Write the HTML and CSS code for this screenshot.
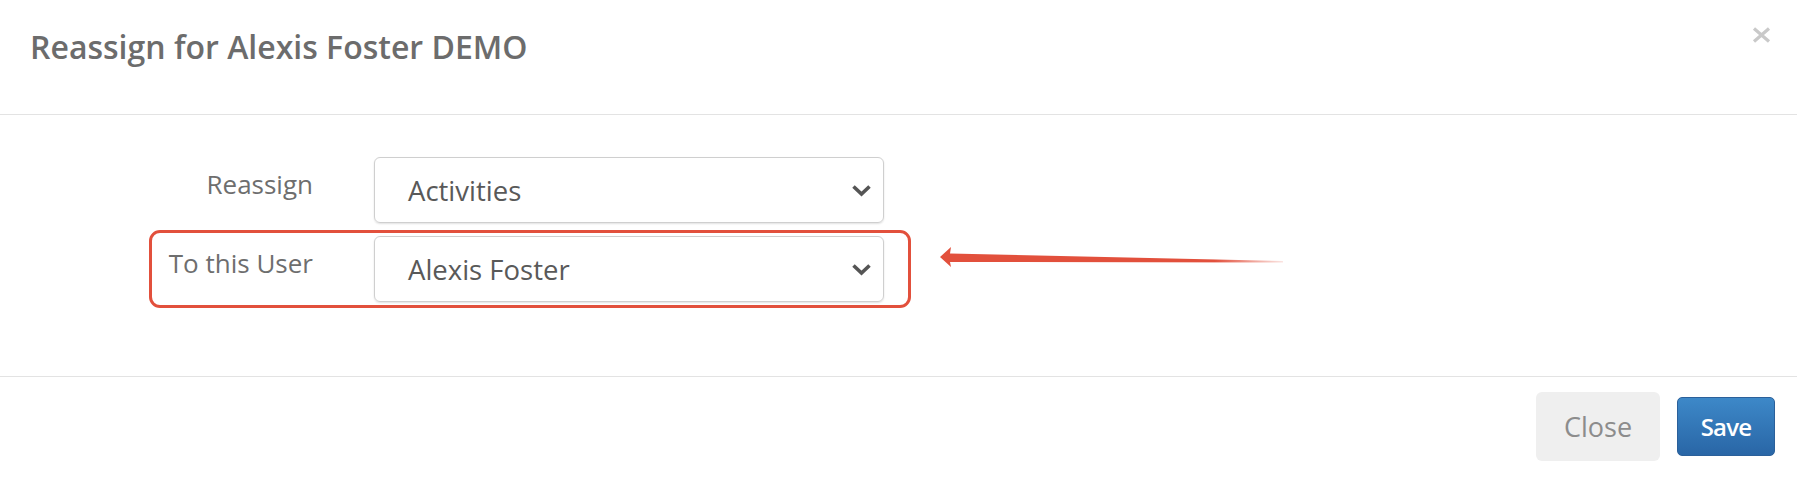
FILE: index.html
```html
<!DOCTYPE html>
<html>
<head>
<meta charset="utf-8">
<link rel="stylesheet" href="styles.css">
</head>
<body>
<div class="modal">
  <div class="modal-header">
    <h4 class="modal-title">Reassign for Alexis Foster DEMO</h4>
    <button class="close" aria-label="Close">
      <svg width="19" height="16" viewBox="0 0 19 16"><path d="M2 1.5 L17 14.5 M17 1.5 L2 14.5" stroke="#c9c9c9" stroke-width="3.2" stroke-linecap="butt"/></svg>
    </button>
  </div>
  <div class="modal-body">
    <div class="form-row">
      <label class="control-label">Reassign</label>
      <div class="select">
        <span class="select-value">Activities</span>
        <svg class="chevron" width="21" height="13" viewBox="0 0 21 13"><path d="M2.5 2.5 L10.5 10 L18.5 2.5" fill="none" stroke="#555" stroke-width="3.6"/></svg>
      </div>
    </div>
    <div class="form-row highlight">
      <label class="control-label">To this User</label>
      <div class="select">
        <span class="select-value">Alexis Foster</span>
        <svg class="chevron" width="21" height="13" viewBox="0 0 21 13"><path d="M2.5 2.5 L10.5 10 L18.5 2.5" fill="none" stroke="#555" stroke-width="3.6"/></svg>
      </div>
    </div>
    <svg class="arrow" width="350" height="26" viewBox="0 0 350 26">
      <defs>
        <linearGradient id="fade" x1="0" y1="0" x2="1" y2="0">
          <stop offset="0" stop-color="#e2503c"/>
          <stop offset="0.8" stop-color="#e2503c"/>
          <stop offset="1" stop-color="#e2503c" stop-opacity="0.15"/>
        </linearGradient>
      </defs>
      <polygon points="2,12 13,2 12,8.5 345,16 345,17.5 12,17 13,22" fill="url(#fade)"/>
    </svg>
  </div>
  <div class="modal-footer">
    <button class="btn btn-default">Close</button>
    <button class="btn btn-primary">Save</button>
  </div>
</div>
</body>
</html>
```
FILE: styles.css
```css
* { box-sizing: border-box; }
html, body {
  margin: 0;
  padding: 0;
  background: #fff;
}
body {
  font-family: "Open Sans", "Liberation Sans", sans-serif;
  width: 1797px;
  height: 487px;
  overflow: hidden;
}
.modal {
  width: 100%;
}
.modal-header {
  height: 115px;
  border-bottom: 1px solid #e3e3e3;
  display: flex;
  justify-content: space-between;
  align-items: flex-start;
  padding: 0 26px 0 30px;
}
.modal-title {
  margin: 0;
  padding-top: 29px;
  font-size: 32px;
  line-height: 36px;
  font-weight: 600;
  color: #6c6c6c;
}
.close {
  margin-top: 27px;
  padding: 0;
  border: 0;
  background: none;
  width: 19px;
  height: 16px;
  display: block;
}
.close svg { display: block; }
.modal-body {
  position: relative;
  height: 261px;
  padding: 36px 0 0 149px;
  display: flex;
  flex-direction: column;
  gap: 1px;
}
.form-row {
  width: 762px;
  height: 78px;
  display: flex;
  align-items: flex-start;
  border: 3px solid transparent;
  border-radius: 11px;
  padding: 3px 24px 3px 0;
}
.form-row.highlight {
  border-color: #e2503c;
}
.control-label {
  width: 161px;
  margin-right: 61px;
  text-align: right;
  font-size: 26px;
  line-height: 36px;
  padding-top: 9px;
  color: #6e6e6e;
  white-space: nowrap;
}
.select {
  width: 510px;
  height: 66px;
  border: 1px solid #cfcfcf;
  border-radius: 6px;
  box-shadow: 0 1px 2px rgba(0,0,0,0.12);
  display: flex;
  align-items: center;
  justify-content: space-between;
  padding: 0 11px 0 33px;
}
.select-value {
  font-size: 27.5px;
  color: #595959;
}
.chevron { display: block; }
.arrow {
  position: absolute;
  left: 938px;
  top: 130px;
}
.modal-footer {
  height: 111px;
  border-top: 1px solid #e3e3e3;
  display: flex;
  justify-content: flex-end;
  align-items: center;
  gap: 17px;
  padding: 0 22px 12px 0;
}
.btn {
  font-family: "Open Sans", "Liberation Sans", sans-serif;
  border-radius: 6px;
  display: flex;
  align-items: center;
  justify-content: center;
}
.btn-default {
  width: 124px;
  height: 69px;
  background: #efefef;
  border: 0;
  color: #8c8c8c;
  font-size: 27px;
}
.btn-primary {
  width: 98px;
  height: 59px;
  background: linear-gradient(#3d88c8, #2966a6);
  border: 1px solid #2b609a;
  border-radius: 5px;
  color: #fff;
  font-size: 24px;
  font-weight: 600;
  letter-spacing: -0.8px;
}
```
